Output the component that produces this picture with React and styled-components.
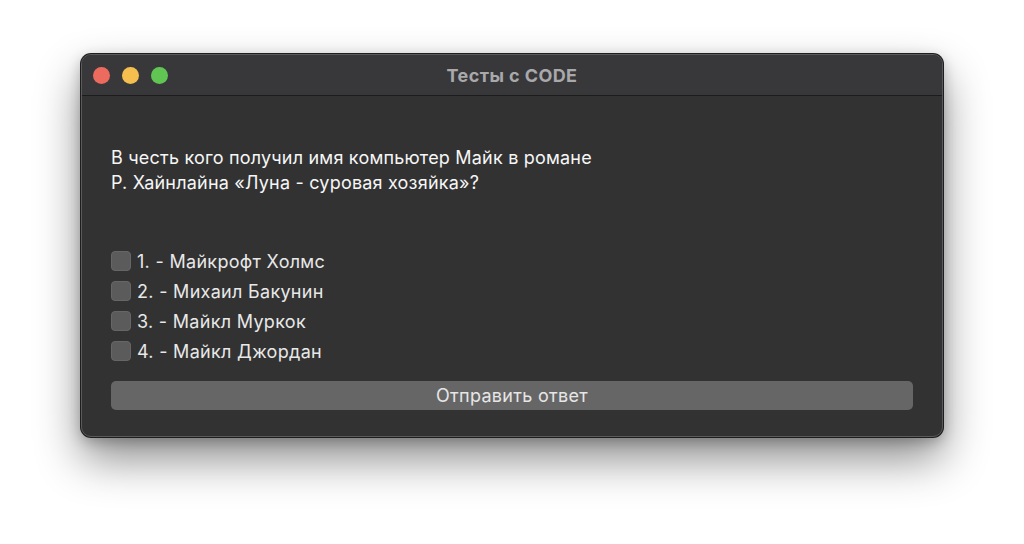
import React from 'react';
import styled, { createGlobalStyle } from 'styled-components';

const Global = createGlobalStyle`
  html, body { margin: 0; padding: 0; background: #ffffff; }
  body { font-family: Inter, "Noto Sans", sans-serif; -webkit-font-smoothing: antialiased; }
`;

const Page = styled.div`
  width: 1024px;
  height: 544px;
  display: flex;
  justify-content: center;
  padding-top: 54px;
  box-sizing: border-box;
`;

const Window = styled.div`
  width: 862px;
  height: 383px;
  box-sizing: border-box;
  border-radius: 10px;
  background: #323232;
  border: 1px solid #5a5a5c;
  box-shadow: 0 0 0 1px #1e1e1e, 0 22px 45px rgba(0, 0, 0, 0.45), 0 4px 14px rgba(0, 0, 0, 0.25);
  overflow: hidden;
  display: flex;
  flex-direction: column;
`;

const TitleBar = styled.div`
  height: 40px;
  flex: none;
  background: #38383b;
  border-bottom: 1px solid #1c1c1c;
  display: flex;
  align-items: center;
  position: relative;
  padding-left: 11px;
`;

const Lights = styled.div`
  display: flex;
  gap: 12px;
`;

const Light = styled.span`
  width: 17px;
  height: 17px;
  border-radius: 50%;
  background: ${p => p.color};
`;

const Title = styled.div`
  position: absolute;
  left: 0;
  right: 0;
  text-align: center;
  color: #a9a9ab;
  font-weight: 700;
  font-size: 18px;
  letter-spacing: 0.4px;
  pointer-events: none;
`;

const Body = styled.div`
  flex: 1;
  padding: 49px 29px 0 29px;
  display: flex;
  flex-direction: column;
`;

const Question = styled.p`
  margin: 0;
  color: #f6f6f6;
  font-size: 18px;
  letter-spacing: 0.2px;
  line-height: 25px;
`;

const Options = styled.div`
  margin-top: 56px;
  display: flex;
  flex-direction: column;
  gap: 10px;
`;

const Option = styled.label`
  display: flex;
  align-items: center;
  gap: 6px;
  color: #e8e8e8;
  font-size: 18px;
  letter-spacing: 0.3px;
  height: 20px;
`;

const Box = styled.span`
  width: 20px;
  height: 20px;
  border-radius: 4px;
  background: #5b5b5b;
  box-sizing: border-box;
  border: 1px solid #666666;
`;

const Submit = styled.button`
  margin-top: 20px;
  height: 29px;
  width: 802px;
  border: none;
  border-radius: 5px;
  background: #666666;
  color: #e6e6e6;
  font-family: inherit;
  font-size: 18px;
  letter-spacing: 0.3px;
  padding: 0;
`;

const answers = [
  '1. - Майкрофт Холмс',
  '2. - Михаил Бакунин',
  '3. - Майкл Муркок',
  '4. - Майкл Джордан',
];

export default function App() {
  return (
    <>
      <Global />
      <Page>
        <Window>
          <TitleBar>
            <Lights>
              <Light color="#ec6a5e" />
              <Light color="#f4bf4f" />
              <Light color="#61c554" />
            </Lights>
            <Title>Тесты с CODE</Title>
          </TitleBar>
          <Body>
            <Question>
              В честь кого получил имя компьютер Майк в романе
              <br />
              Р. Хайнлайна «Луна - суровая хозяйка»?
            </Question>
            <Options>
              {answers.map(a => (
                <Option key={a}>
                  <Box />
                  {a}
                </Option>
              ))}
            </Options>
            <Submit>Отправить ответ</Submit>
          </Body>
        </Window>
      </Page>
    </>
  );
}
